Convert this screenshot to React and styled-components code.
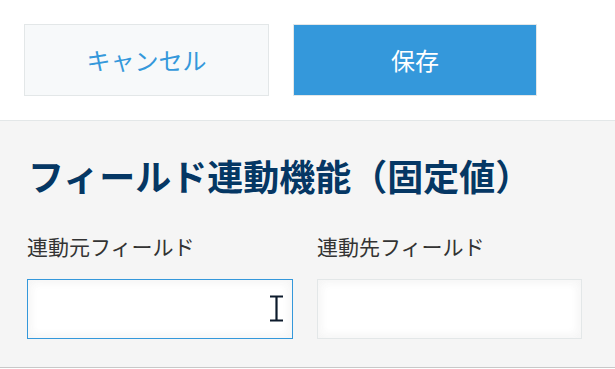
import React from "react";
import styled, { createGlobalStyle } from "styled-components";

const Global = createGlobalStyle`
  html, body { margin: 0; padding: 0; background: #ffffff; }
  body { font-family: "Noto Sans CJK JP", "Noto Sans", sans-serif; }
  * { box-sizing: border-box; }
`;

const Toolbar = styled.div`
  display: flex;
  gap: 24px;
  height: 121px;
  padding: 24px 0 0 24px;
  border-bottom: 1px solid #e3e7e8;
`;

const Button = styled.button`
  width: ${(p) => p.$w}px;
  height: 72px;
  margin: 0;
  padding: 0;
  border: 1px solid #e3e7e8;
  background: ${(p) => (p.$primary ? "#3498db" : "#f7f9fa")};
  color: ${(p) => (p.$primary ? "#ffffff" : "#3498db")};
  font-family: "Noto Sans CJK JP", sans-serif;
  font-size: 24px;
  font-weight: 400;
  line-height: 1;
  display: flex;
  align-items: center;
  justify-content: center;
  cursor: pointer;
`;

const Panel = styled.section`
  background: #f5f5f5;
  height: 247px;
  border-bottom: 1px solid #c8c8c8;
  padding: 36px 0 0 0;
`;

const Title = styled.h2`
  margin: 0;
  padding-left: 28px;
  font-size: 36px;
  line-height: 36px;
  font-weight: 700;
  color: #053764;
  white-space: nowrap;
`;

const Fields = styled.div`
  display: flex;
  gap: 24px;
  padding: 43px 0 0 27px;
`;

const Field = styled.div`
  display: flex;
  flex-direction: column;
  gap: 22px;
  width: ${(p) => p.$w}px;
`;

const Label = styled.label`
  font-size: 21px;
  line-height: 21px;
  color: #333333;
  white-space: nowrap;
`;

const InputWrap = styled.div`
  position: relative;
  height: 60px;
`;

const Input = styled.input`
  width: 100%;
  height: 60px;
  margin: 0;
  padding: 0 10px;
  background: #ffffff;
  border: 1px solid ${(p) => (p.$focused ? "#3498db" : "#e3e7e8")};
  box-shadow: 1px 1px 12px #f5f5f5 inset, -1px -1px 12px #f5f5f5 inset;
  outline: none;
  font-size: 20px;
  font-family: "Noto Sans CJK JP", sans-serif;
`;

const Cursor = styled.svg`
  position: absolute;
  left: 242px;
  top: 16px;
  pointer-events: none;
`;

export default function App() {
  return (
    <>
      <Global />
      <Toolbar>
        <Button $w={245}>キャンセル</Button>
        <Button $w={244} $primary>保存</Button>
      </Toolbar>
      <Panel>
        <Title>フィールド連動機能（固定値）</Title>
        <Fields>
          <Field $w={266}>
            <Label>連動元フィールド</Label>
            <InputWrap>
              <Input $focused />
              <Cursor width="16" height="27" viewBox="0 0 16 27">
                <path d="M1 1.5h13M1 25.5h13M7.5 1.5v24" stroke="#0d1b2c" strokeWidth="2.2" fill="none" />
              </Cursor>
            </InputWrap>
          </Field>
          <Field $w={265}>
            <Label>連動先フィールド</Label>
            <InputWrap>
              <Input />
            </InputWrap>
          </Field>
        </Fields>
      </Panel>
    </>
  );
}
